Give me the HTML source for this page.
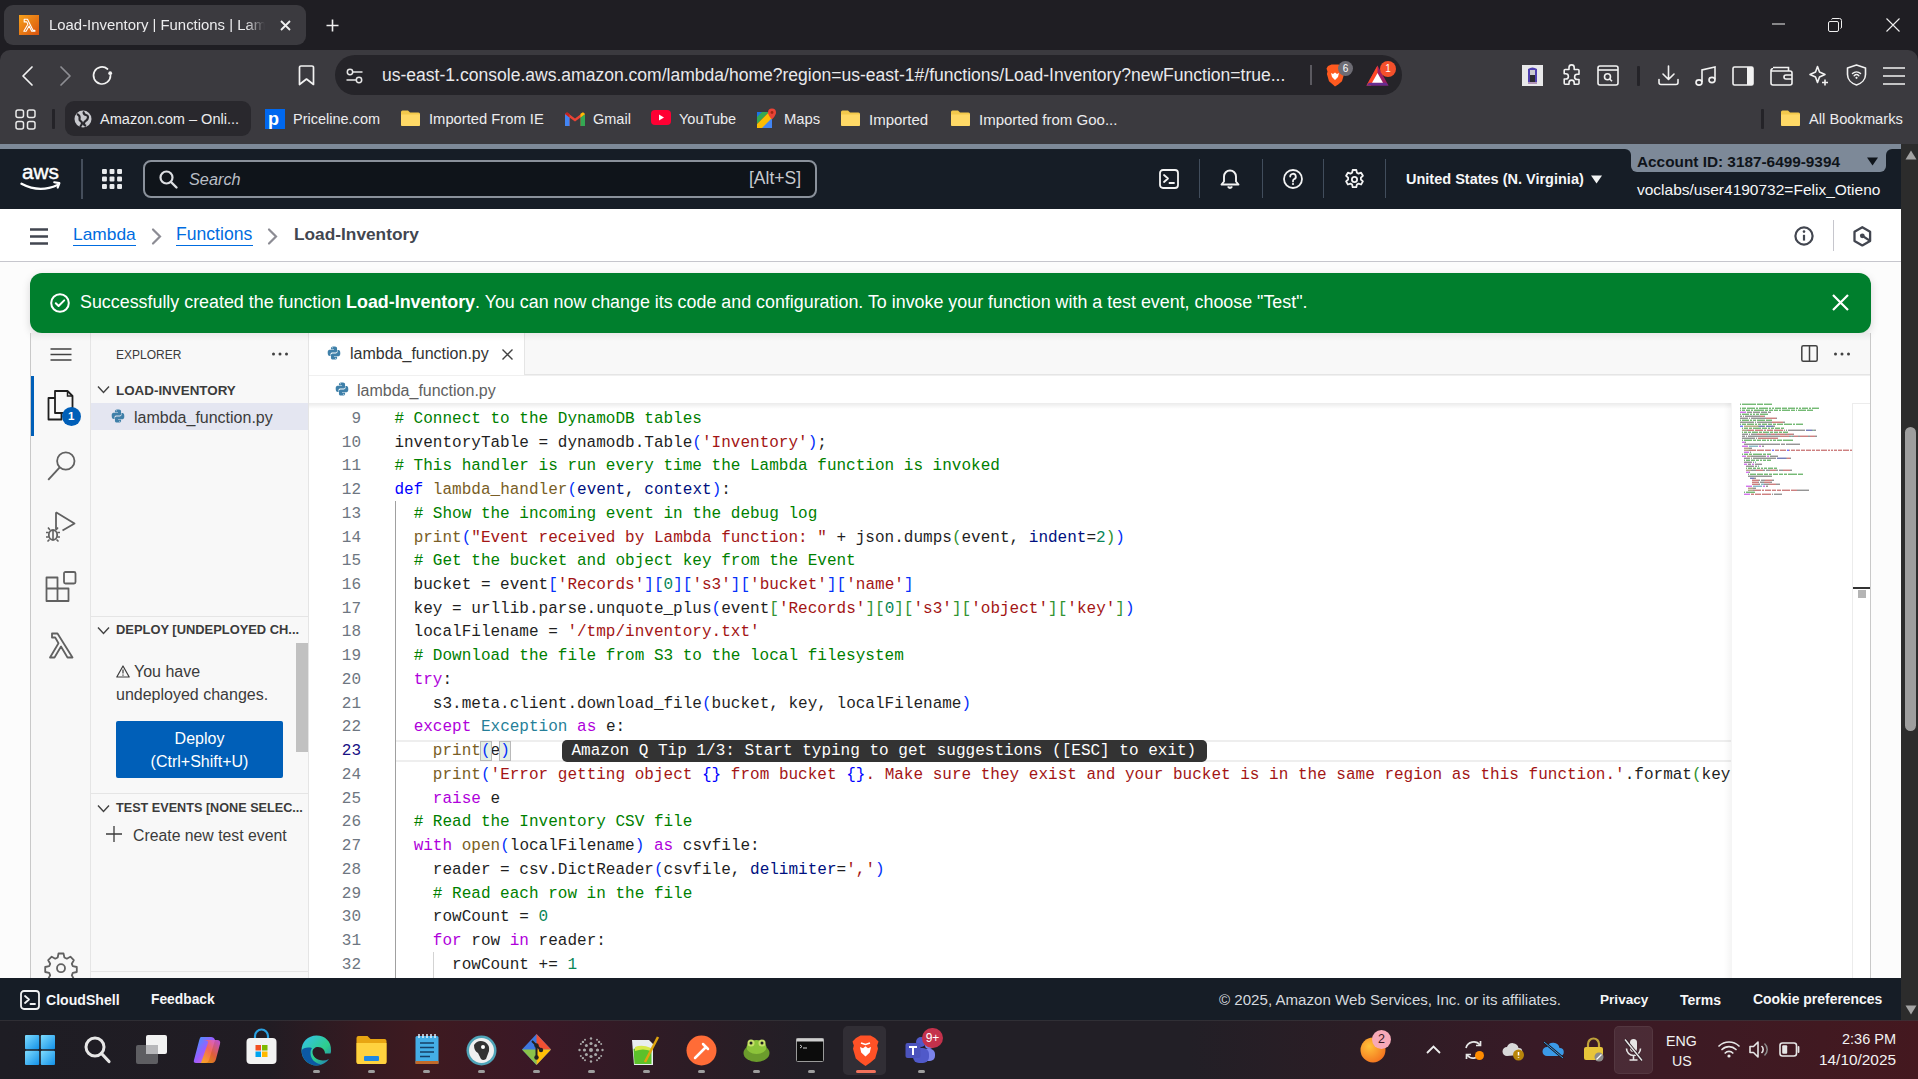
<!DOCTYPE html>
<html><head><meta charset="utf-8">
<style>
*{margin:0;padding:0;box-sizing:border-box}
html,body{width:1918px;height:1079px;overflow:hidden;background:#fcfcfc;font-family:"Liberation Sans",sans-serif}
.a{position:absolute}
.t{position:absolute;white-space:nowrap;line-height:1}
svg{position:absolute;overflow:visible}
.m{font-family:"Liberation Mono",monospace}
</style></head><body>
<!-- ============ BROWSER TAB BAR ============ -->
<div class="a" style="left:0;top:0;width:1918px;height:144px;background:#1f1e23"></div>
<div class="a" style="left:4px;top:5px;width:302px;height:40px;background:#3b3a3f;border-radius:9px"></div>
<div class="a" style="left:19px;top:15px;width:20px;height:20px;background:linear-gradient(135deg,#f7a21b,#d9530f)"></div>
<svg style="left:19px;top:15px" width="20" height="20" viewBox="0 0 20 20"><path d="M5.2 4.2h3.3l5.6 11.2h1.8v0.8h-3.2l-2.6-5.3-3 5.3h-2.3l4.1-7-1.1-2.3H5.2z" fill="none" stroke="#fff" stroke-width="1.1" stroke-linejoin="round"/></svg>
<div class="t" style="left:49px;top:17.5px;font-size:14.9px;color:#ececee;width:216px;overflow:hidden;-webkit-mask-image:linear-gradient(90deg,#000 91%,transparent 100%)">Load-Inventory | Functions | Lambda</div>
<svg style="left:280px;top:20px" width="11" height="11" viewBox="0 0 11 11"><path d="M1 1L10 10M10 1L1 10" stroke="#f0f0f0" stroke-width="1.8"/></svg>
<svg style="left:326px;top:19px" width="13" height="13" viewBox="0 0 13 13"><path d="M6.5 0.5v12M0.5 6.5h12" stroke="#f0f0f0" stroke-width="1.6"/></svg>
<svg style="left:1772px;top:23px" width="13" height="2" viewBox="0 0 13 2"><path d="M0 1h13" stroke="#f0f0f0" stroke-width="1"/></svg>
<svg style="left:1828px;top:18px" width="14" height="14" viewBox="0 0 14 14"><rect x="0.5" y="3.5" width="10" height="10" rx="1.5" fill="none" stroke="#f0f0f0" stroke-width="1"/><path d="M3.5 1.5a1.5 1.5 0 0 1 1.5-1h6.5a2 2 0 0 1 2 2V9a1.5 1.5 0 0 1-1 1.5" fill="none" stroke="#f0f0f0" stroke-width="1"/></svg>
<svg style="left:1886px;top:18px" width="14" height="14" viewBox="0 0 14 14"><path d="M0.5 0.5L13.5 13.5M13.5 0.5L0.5 13.5" stroke="#f0f0f0" stroke-width="1.1"/></svg>

<!-- ============ TOOLBAR ============ -->
<div class="a" style="left:0;top:50px;width:1918px;height:94px;background:#3b3a3f;border-radius:10px 10px 0 0"></div>
<svg style="left:22px;top:66px" width="11" height="20" viewBox="0 0 11 20"><path d="M10 1L1 10l9 9" fill="none" stroke="#f2f2f2" stroke-width="1.7" stroke-linecap="round" stroke-linejoin="round"/></svg>
<svg style="left:60px;top:66px" width="11" height="20" viewBox="0 0 11 20"><path d="M1 1l9 9-9 9" fill="none" stroke="#8e8e93" stroke-width="1.7" stroke-linecap="round" stroke-linejoin="round"/></svg>
<svg style="left:92px;top:65px" width="22" height="21" viewBox="0 0 22 21"><path d="M18.5 10.5a8.5 8.5 0 1 1-3-6.5" fill="none" stroke="#f2f2f2" stroke-width="1.7" stroke-linecap="round"/><circle cx="18.2" cy="8.2" r="1.9" fill="#f2f2f2"/></svg>
<svg style="left:298px;top:65px" width="17" height="21" viewBox="0 0 17 21"><path d="M1.5 2.5a1.5 1.5 0 0 1 1.5-1.5h11a1.5 1.5 0 0 1 1.5 1.5V19.5L8.5 14 1.5 19.5z" fill="none" stroke="#f2f2f2" stroke-width="1.7" stroke-linejoin="round"/></svg>
<div class="a" style="left:335px;top:55px;width:1067px;height:40px;background:#252429;border-radius:20px"></div>
<svg style="left:346px;top:68px" width="17" height="16" viewBox="0 0 17 16"><circle cx="4" cy="4" r="2.7" fill="none" stroke="#e6e6e6" stroke-width="1.5"/><path d="M7 4h9.5" stroke="#e6e6e6" stroke-width="1.5"/><circle cx="13" cy="12" r="2.7" fill="none" stroke="#e6e6e6" stroke-width="1.5"/><path d="M0.5 12h9.5" stroke="#e6e6e6" stroke-width="1.5"/></svg>
<div class="t" style="left:382px;top:67px;font-size:17.55px;color:#e9e9ec">us-east-1.console.aws.amazon.com/lambda/home?region=us-east-1#/functions/Load-Inventory?newFunction=true...</div>
<div class="a" style="left:1310px;top:65px;width:2px;height:20px;background:#5b5a60"></div>
<!-- brave lion -->
<svg style="left:1325px;top:64px" width="20" height="23" viewBox="0 0 20 23"><path d="M3 2l3.5-1.5h7L17 2l2.5 2.5-1 3 .6 2.5-2.1 7.2-3.8 3.3L10 22.5 7.8 20.5 4 17.2 1.9 10l.6-2.5-1-3z" fill="#ff5a1f"/><path d="M6 9l2 1 2-1.5 2 1.5 2-1-1 4-3 3-3-3z" fill="#fff"/></svg>
<div class="a" style="left:1338px;top:61px;width:15px;height:15px;border-radius:50%;background:#6d6c74;color:#fff;font-size:10px;line-height:15px;text-align:center">6</div>
<svg style="left:1366px;top:65px" width="23" height="21" viewBox="0 0 23 21"><path d="M11.5 0.5L22.5 20.5H0.5z" fill="#9e1f63"/><path d="M11.5 0.5L0.5 20.5h4.5L11.5 8z" fill="#ff4724"/><path d="M0.5 20.5h22l-2.5-2.8H3z" fill="#662d91"/><path d="M11.5 8l5.5 9.7H6z" fill="#fff"/></svg>
<div class="a" style="left:1380px;top:61px;width:16px;height:16px;border-radius:50%;background:#f4502b;color:#fff;font-size:10px;line-height:16px;text-align:center">1</div>
<!-- right icons -->
<div class="a" style="left:1522px;top:65px;width:21px;height:21px;background:#e8e8ea"></div>
<svg style="left:1522px;top:65px" width="21" height="21" viewBox="0 0 21 21"><path d="M6 4q4.5-3 9 0v13H6z" fill="#4f3fb0"/><rect x="8" y="5" width="5" height="5" fill="#c9c9cf"/><rect x="8" y="10" width="5" height="7" fill="#2a2a30"/><path d="M6 18h9" stroke="#a07aa8" stroke-width="1.5"/></svg>
<svg style="left:1561px;top:64px" width="22" height="22" viewBox="0 0 22 22"><path d="M8 3.5a2.6 2.6 0 0 1 5.2 0V5.5H17a1 1 0 0 1 1 1v3.8h-1.8a2.6 2.6 0 0 0 0 5.2H18v3.8a1 1 0 0 1-1 1H13.2v-1.6a2.6 2.6 0 0 0-5.2 0v1.6H4.2a1 1 0 0 1-1-1V15h1.6a2.6 2.6 0 0 0 0-5.2H3.2V6.5a1 1 0 0 1 1-1H8z" fill="none" stroke="#f2f2f2" stroke-width="1.6" stroke-linejoin="round"/></svg>
<svg style="left:1597px;top:65px" width="22" height="21" viewBox="0 0 22 21"><rect x="1" y="1" width="20" height="19" rx="2" fill="none" stroke="#f2f2f2" stroke-width="1.6"/><path d="M1 5h20" stroke="#f2f2f2" stroke-width="1.6"/><circle cx="10.5" cy="11.8" r="3" fill="none" stroke="#f2f2f2" stroke-width="1.6"/><path d="M12.7 14l2.3 2.3" stroke="#f2f2f2" stroke-width="1.6"/></svg>
<div class="a" style="left:1637px;top:66px;width:3px;height:20px;background:#242328;border-radius:1px"></div>
<svg style="left:1658px;top:65px" width="21" height="21" viewBox="0 0 21 21"><path d="M10.5 1v13M5 9l5.5 5.5L16 9M1 14.5v3a2 2 0 0 0 2 2h15a2 2 0 0 0 2-2v-3" fill="none" stroke="#f2f2f2" stroke-width="1.6" stroke-linecap="round" stroke-linejoin="round"/></svg>
<svg style="left:1695px;top:65px" width="22" height="22" viewBox="0 0 22 22"><path d="M7 17V5l13-3v12.5" fill="none" stroke="#f2f2f2" stroke-width="1.6"/><ellipse cx="4" cy="17.5" rx="3" ry="2.6" fill="none" stroke="#f2f2f2" stroke-width="1.6"/><ellipse cx="17" cy="15" rx="3" ry="2.6" fill="none" stroke="#f2f2f2" stroke-width="1.6"/></svg>
<svg style="left:1732px;top:66px" width="22" height="20" viewBox="0 0 22 20"><rect x="1" y="1" width="20" height="18" rx="1.5" fill="none" stroke="#f2f2f2" stroke-width="1.6"/><rect x="15" y="1" width="6" height="18" fill="#f2f2f2"/></svg>
<svg style="left:1770px;top:66px" width="23" height="20" viewBox="0 0 23 20"><path d="M3 1.5h15.5V5M1 4.5a2 2 0 0 1 2-2M1 4.5V17a2 2 0 0 0 2 2h17a2 2 0 0 0 2-2V7a2 2 0 0 0-2-2H1" fill="none" stroke="#f2f2f2" stroke-width="1.6"/><path d="M22 9h-6a2 2 0 0 0 0 4h6" fill="none" stroke="#f2f2f2" stroke-width="1.6"/></svg>
<svg style="left:1808px;top:65px" width="22" height="22" viewBox="0 0 22 22"><path d="M9.5 1.5l2 5.5 5.5 2.5-5.5 2.5-2 5.5-2-5.5L2 9.5l5.5-2.5z" fill="none" stroke="#f2f2f2" stroke-width="1.6" stroke-linejoin="round"/><path d="M17 14.5v6M14 17.5h6" stroke="#f2f2f2" stroke-width="1.6"/></svg>
<svg style="left:1846px;top:64px" width="21" height="22" viewBox="0 0 21 22"><path d="M10.5 1L19.5 4v6.5c0 5-4 9-9 10.5C5.5 19.5 1.5 15.5 1.5 10.5V4z" fill="none" stroke="#f2f2f2" stroke-width="1.6" stroke-linejoin="round"/><path d="M6.5 9.5a6 6 0 0 1 8 0M8.2 11.7a3.3 3.3 0 0 1 4.6 0" fill="none" stroke="#f2f2f2" stroke-width="1.5" stroke-linecap="round"/><circle cx="10.5" cy="13.8" r="1.1" fill="#f2f2f2"/></svg>
<svg style="left:1883px;top:67px" width="22" height="18" viewBox="0 0 22 18"><path d="M0 1h22M0 9h22M0 17h22" stroke="#f2f2f2" stroke-width="1.6"/></svg>

<!-- ============ BOOKMARKS BAR ============ -->
<svg style="left:15px;top:109px" width="21" height="21" viewBox="0 0 21 21"><rect x="1" y="1" width="7.5" height="7.5" rx="2" fill="none" stroke="#e9e9e9" stroke-width="1.5"/><rect x="12.5" y="1" width="7.5" height="7.5" rx="2" fill="none" stroke="#e9e9e9" stroke-width="1.5"/><rect x="1" y="12.5" width="7.5" height="7.5" rx="2" fill="none" stroke="#e9e9e9" stroke-width="1.5"/><rect x="12.5" y="12.5" width="7.5" height="7.5" rx="2" fill="none" stroke="#e9e9e9" stroke-width="1.5"/></svg>
<div class="a" style="left:52px;top:109px;width:3px;height:20px;background:#242328;border-radius:1px"></div>
<div class="a" style="left:65px;top:101px;width:186px;height:35px;background:#29282d;border-radius:9px"></div>
<svg style="left:74px;top:110px" width="18" height="18" viewBox="0 0 18 18"><circle cx="9" cy="9" r="8.5" fill="#c8c9ce"/><path d="M3 4c2 1 3 3 2.5 5S8 11 8 13s-1.5 3-2 3.8M10 1.5c-1 1.5 0 3 2 3.5s2.5 2 1.5 4-3 2-3.5 4 1 2.5 2 3" fill="none" stroke="#29282d" stroke-width="2.2"/></svg>
<div class="t" style="left:100px;top:112px;font-size:14.55px;color:#ececee">Amazon.com – Onli...</div>
<div class="a" style="left:265px;top:109px;width:20px;height:20px;background:#0068ef"></div>
<div class="t" style="left:268px;top:110px;font-size:18px;font-weight:bold;color:#fff">p</div>
<div class="t" style="left:293px;top:112px;font-size:14.5px;color:#ececee">Priceline.com</div>
<svg style="left:401px;top:110px" width="19" height="16" viewBox="0 0 19 16"><path d="M0 2a1.5 1.5 0 0 1 1.5-1.5H7l2 2h8.5A1.5 1.5 0 0 1 19 4v10.5a1.5 1.5 0 0 1-1.5 1.5h-16A1.5 1.5 0 0 1 0 14.5z" fill="#f3c94c"/><path d="M0 4.5h19v10a1.5 1.5 0 0 1-1.5 1.5h-16A1.5 1.5 0 0 1 0 14.5z" fill="#ffd966"/></svg>
<div class="t" style="left:429px;top:112px;font-size:14.75px;color:#ececee">Imported From IE</div>
<svg style="left:565px;top:111px" width="20" height="16" viewBox="0 0 20 16"><path d="M0 3v12h4.5V6.5L10 10.5l5.5-4V15H20V3l-2-1.6-8 6-8-6z" fill="#ea4335"/><path d="M0 3v12h4.5V6.5z" fill="#4285f4"/><path d="M15.5 6.5V15H20V3z" fill="#34a853"/><path d="M20 3l-4.5 3.5V2.8L18 1.2z" fill="#fbbc04"/><path d="M0 3l4.5 3.5V2.8L2 1.2z" fill="#c5221f"/></svg>
<div class="t" style="left:593px;top:112px;font-size:14.5px;color:#ececee">Gmail</div>
<div class="a" style="left:651px;top:110px;width:20px;height:15px;background:#ff0033;border-radius:4px"></div>
<svg style="left:651px;top:110px" width="20" height="15" viewBox="0 0 20 15"><path d="M8 4.5v6l5-3z" fill="#fff"/></svg>
<div class="t" style="left:679px;top:112px;font-size:14.55px;color:#ececee">YouTube</div>
<svg style="left:757px;top:108px" width="19" height="20" viewBox="0 0 19 20"><path d="M0 4h12l-12 12z" fill="#34a853"/><path d="M0 16L12 4h3v16H0z" fill="#fbbc04"/><path d="M5 20L15 10v10z" fill="#4285f4"/><path d="M0 4h5L0 9z" fill="#1a73e8"/><path d="M15 0.5a4 4 0 0 0-4 4c0 3 4 7 4 7s4-4 4-7a4 4 0 0 0-4-4z" fill="#ea4335"/><circle cx="15" cy="4.5" r="1.4" fill="#a52714"/></svg>
<div class="t" style="left:784px;top:112px;font-size:14.8px;color:#ececee">Maps</div>
<svg style="left:841px;top:110px" width="19" height="16" viewBox="0 0 19 16"><path d="M0 2a1.5 1.5 0 0 1 1.5-1.5H7l2 2h8.5A1.5 1.5 0 0 1 19 4v10.5a1.5 1.5 0 0 1-1.5 1.5h-16A1.5 1.5 0 0 1 0 14.5z" fill="#f3c94c"/><path d="M0 4.5h19v10a1.5 1.5 0 0 1-1.5 1.5h-16A1.5 1.5 0 0 1 0 14.5z" fill="#ffd966"/></svg>
<div class="t" style="left:869px;top:112px;font-size:15px;color:#ececee">Imported</div>
<svg style="left:951px;top:110px" width="19" height="16" viewBox="0 0 19 16"><path d="M0 2a1.5 1.5 0 0 1 1.5-1.5H7l2 2h8.5A1.5 1.5 0 0 1 19 4v10.5a1.5 1.5 0 0 1-1.5 1.5h-16A1.5 1.5 0 0 1 0 14.5z" fill="#f3c94c"/><path d="M0 4.5h19v10a1.5 1.5 0 0 1-1.5 1.5h-16A1.5 1.5 0 0 1 0 14.5z" fill="#ffd966"/></svg>
<div class="t" style="left:979px;top:112px;font-size:15px;color:#ececee">Imported from Goo...</div>
<div class="a" style="left:1761px;top:109px;width:3px;height:20px;background:#242328;border-radius:1px"></div>
<svg style="left:1781px;top:110px" width="19" height="16" viewBox="0 0 19 16"><path d="M0 2a1.5 1.5 0 0 1 1.5-1.5H7l2 2h8.5A1.5 1.5 0 0 1 19 4v10.5a1.5 1.5 0 0 1-1.5 1.5h-16A1.5 1.5 0 0 1 0 14.5z" fill="#f3c94c"/><path d="M0 4.5h19v10a1.5 1.5 0 0 1-1.5 1.5h-16A1.5 1.5 0 0 1 0 14.5z" fill="#ffd966"/></svg>
<div class="t" style="left:1809px;top:112px;font-size:14.7px;color:#ececee">All Bookmarks</div>
<!-- ============ AWS NAV ============ -->
<div class="a" style="left:0;top:144px;width:1901px;height:12px;background:#7d8998"></div>
<div class="a" style="left:0;top:149px;width:1631px;height:60px;background:#161d26;border-top-right-radius:6px"></div>
<div class="a" style="left:1631px;top:156px;width:255px;height:53px;background:#161d26"></div>
<div class="a" style="left:1886px;top:149px;width:15px;height:60px;background:#161d26;border-top-left-radius:6px"></div>
<svg style="left:20px;top:165px" width="42" height="27" viewBox="0 0 42 27">
<text x="2" y="13.6" font-family="Liberation Sans" font-size="20" fill="#fff" stroke="#fff" stroke-width="0.4" textLength="37" lengthAdjust="spacingAndGlyphs">aws</text>
<path d="M1.5 18.8q18 9.5 36 1.2" fill="none" stroke="#fff" stroke-width="2.4" stroke-linecap="round"/>
<path d="M34.2 17.2l5.2 0.9-1.7 4.5" fill="none" stroke="#fff" stroke-width="2.1" stroke-linecap="round" stroke-linejoin="round"/>
</svg>
<div class="a" style="left:81px;top:159px;width:1.5px;height:40px;background:#454e5b"></div>
<svg style="left:102px;top:169px" width="20" height="20" viewBox="0 0 20 20" fill="#e9ebed"><rect x="0" y="0" width="4.9" height="4.9" rx="1"/><rect x="7.55" y="0" width="4.9" height="4.9" rx="1"/><rect x="15.1" y="0" width="4.9" height="4.9" rx="1"/><rect x="0" y="7.55" width="4.9" height="4.9" rx="1"/><rect x="7.55" y="7.55" width="4.9" height="4.9" rx="1"/><rect x="15.1" y="7.55" width="4.9" height="4.9" rx="1"/><rect x="0" y="15.1" width="4.9" height="4.9" rx="1"/><rect x="7.55" y="15.1" width="4.9" height="4.9" rx="1"/><rect x="15.1" y="15.1" width="4.9" height="4.9" rx="1"/></svg>
<div class="a" style="left:143px;top:160px;width:674px;height:38px;background:#0f141a;border:2px solid #8a919b;border-radius:8px"></div>
<svg style="left:159px;top:170px" width="19" height="19" viewBox="0 0 19 19"><circle cx="7.5" cy="7.5" r="6" fill="none" stroke="#dcdee2" stroke-width="2.2"/><path d="M12 12l5.5 5.5" stroke="#dcdee2" stroke-width="2.4" stroke-linecap="round"/></svg>
<div class="t" style="left:189px;top:171px;font-size:16.3px;font-style:italic;color:#b9bec6">Search</div>
<div class="t" style="left:749px;top:170px;font-size:17.5px;color:#c6c9ce">[Alt+S]</div>
<svg style="left:1159px;top:169px" width="20" height="20" viewBox="0 0 20 20"><rect x="1" y="1" width="18" height="18" rx="3" fill="none" stroke="#f2f3f3" stroke-width="1.8"/><path d="M5 6l4 3.5L5 13M10.5 14h4.5" fill="none" stroke="#f2f3f3" stroke-width="1.8" stroke-linecap="round" stroke-linejoin="round"/></svg>
<div class="a" style="left:1199px;top:159px;width:1px;height:39px;background:#414d5c"></div>
<svg style="left:1220px;top:169px" width="20" height="21" viewBox="0 0 20 21"><path d="M10 1.5a6 6 0 0 0-6 6v5L1.5 15.5h17L16 12.5v-5a6 6 0 0 0-6-6z" fill="none" stroke="#f2f3f3" stroke-width="1.9" stroke-linejoin="round"/><path d="M7.8 17.5a2.3 2.3 0 0 0 4.4 0" fill="#f2f3f3" stroke="#f2f3f3" stroke-width="1.5"/></svg>
<div class="a" style="left:1262px;top:159px;width:1px;height:39px;background:#414d5c"></div>
<svg style="left:1283px;top:169px" width="20" height="20" viewBox="0 0 20 20"><circle cx="10" cy="10" r="9" fill="none" stroke="#f2f3f3" stroke-width="1.8"/><path d="M7.2 7.6a2.8 2.8 0 1 1 3.8 2.6c-.8.4-1 .9-1 1.8v.6" fill="none" stroke="#f2f3f3" stroke-width="1.8" stroke-linecap="round"/><circle cx="10" cy="15" r="1.1" fill="#f2f3f3"/></svg>
<div class="a" style="left:1323px;top:159px;width:1px;height:39px;background:#414d5c"></div>
<svg style="left:1344px;top:169px" width="21" height="21" viewBox="0 0 21 21"><path d="M8.7 1h3.6l.6 2.7 1.6.9 2.6-.9 1.8 3.1-2 1.9v1.8l2 1.9-1.8 3.1-2.6-.9-1.6.9-.6 2.7H8.7l-.6-2.7-1.6-.9-2.6.9-1.8-3.1 2-1.9V8.7l-2-1.9 1.8-3.1 2.6.9 1.6-.9z" fill="none" stroke="#f2f3f3" stroke-width="1.8" stroke-linejoin="round"/><circle cx="10.5" cy="10.5" r="2.6" fill="none" stroke="#f2f3f3" stroke-width="1.8"/></svg>
<div class="a" style="left:1385px;top:159px;width:1px;height:39px;background:#414d5c"></div>
<div class="t" style="left:1406px;top:172px;font-size:14.5px;font-weight:bold;color:#f6f7f8">United States (N. Virginia)</div>
<svg style="left:1591px;top:175px" width="11" height="9" viewBox="0 0 11 9"><path d="M0 0.5h11L5.5 8.5z" fill="#f2f3f3"/></svg>
<div class="a" style="left:1631px;top:144px;width:255px;height:28px;background:#7d8998;border-radius:0 0 6px 6px"></div>
<div class="t" style="left:1637px;top:154px;font-size:15.35px;font-weight:bold;color:#0f141a">Account ID: 3187-6499-9394</div>
<svg style="left:1867px;top:157px" width="11" height="9" viewBox="0 0 11 9"><path d="M0 0.5h11L5.5 8.5z" fill="#0f141a"/></svg>
<div class="t" style="left:1637px;top:182px;font-size:15.5px;color:#f6f7f8">voclabs/user4190732=Felix_Otieno</div>

<!-- ============ BREADCRUMB ============ -->
<div class="a" style="left:0;top:209px;width:1902px;height:53px;background:#fff;border-bottom:1px solid #c6c6cd"></div>
<svg style="left:30px;top:228px" width="19" height="17" viewBox="0 0 19 17"><path d="M0 1.5h18M0 8.5h18M0 15.5h18" stroke="#424650" stroke-width="2.6"/></svg>
<div class="t" style="left:73px;top:226px;font-size:17.35px;color:#006ce0">Lambda</div>
<div class="a" style="left:73px;top:245px;width:63px;height:1px;background:#006ce0"></div>
<svg style="left:151px;top:228px" width="11" height="17" viewBox="0 0 11 17"><path d="M2 1.5l7 7-7 7" fill="none" stroke="#8c8c94" stroke-width="2.2" stroke-linecap="round"/></svg>
<div class="t" style="left:176px;top:226px;font-size:17.6px;color:#006ce0">Functions</div>
<div class="a" style="left:176px;top:245px;width:77px;height:1px;background:#006ce0"></div>
<svg style="left:267px;top:228px" width="11" height="17" viewBox="0 0 11 17"><path d="M2 1.5l7 7-7 7" fill="none" stroke="#8c8c94" stroke-width="2.2" stroke-linecap="round"/></svg>
<div class="t" style="left:294px;top:226px;font-size:17.3px;font-weight:bold;color:#424650">Load-Inventory</div>
<svg style="left:1794px;top:226px" width="20" height="20" viewBox="0 0 20 20"><circle cx="10" cy="10" r="8.6" fill="none" stroke="#424650" stroke-width="2.2"/><path d="M10 8.8v5.8" stroke="#424650" stroke-width="2.2"/><circle cx="10" cy="5.6" r="1.3" fill="#424650"/></svg>
<div class="a" style="left:1833px;top:220px;width:1px;height:31px;background:#c6c6cd"></div>
<svg style="left:1853px;top:226px" width="19" height="21" viewBox="0 0 19 21"><path d="M9.3 1.2l7.8 4.5v9.2l-7.8 4.5-7.8-4.5V5.7z" fill="none" stroke="#424650" stroke-width="2.3" stroke-linejoin="round"/><circle cx="9.3" cy="9.8" r="2.4" fill="#424650"/><path d="M9.3 9.8l7 4.6" stroke="#424650" stroke-width="2.3"/></svg>

<!-- ============ FLASH ============ -->
<div class="a" style="left:30px;top:273px;width:1841px;height:60px;background:#007f2d;border-radius:12px;box-shadow:0 3px 8px rgba(0,0,0,0.15)"></div>
<svg style="left:50px;top:293px" width="20" height="20" viewBox="0 0 20 20"><circle cx="10" cy="10" r="8.8" fill="none" stroke="#fff" stroke-width="2"/><path d="M5.8 10.2l2.8 2.8 5.6-5.6" fill="none" stroke="#fff" stroke-width="2" stroke-linecap="round" stroke-linejoin="round"/></svg>
<div class="t" id="flash" style="left:80px;top:294px;font-size:17.86px;color:#fff">Successfully created the function <b>Load-Inventory</b>. You can now change its code and configuration. To invoke your function with a test event, choose "Test".</div>
<svg style="left:1832px;top:294px" width="17" height="17" viewBox="0 0 17 17"><path d="M1 1l15 15M16 1L1 16" stroke="#fff" stroke-width="2.2"/></svg>
<!-- ============ IDE FRAME ============ -->
<style>
.ln{position:absolute;left:1px;width:51px;text-align:right;height:23.75px;line-height:23.75px;font-family:"Liberation Mono",monospace;font-size:16.03px;color:#6e7681}
.ln.act{color:#171184}
.cdl{position:absolute;left:85.4px;height:23.75px;line-height:23.75px;font-family:"Liberation Mono",monospace;font-size:16.03px;white-space:pre;color:#1f1f1f}
.cdl .c{color:#008000}.cdl .k{color:#0000ff}.cdl .p{color:#af00db}.cdl .f{color:#795e26}.cdl .v{color:#001080}.cdl .s{color:#a31515}.cdl .n{color:#098658}.cdl .cl{color:#267f99}.cdl .b1{color:#0431fa}.cdl .b2{color:#319331}.cdl .b3{color:#7b3814}.cdl .d{color:#1f1f1f}
.cdl .bm{color:#0431fa;outline:1px solid #b9b9b9;background:#e4efe4}
.sb{font-family:"Liberation Sans",sans-serif}
</style>
<div class="a" style="left:30px;top:333px;width:1841px;height:645px;background:#fff;border-left:1px solid #c9c9c9;border-right:1px solid #c9c9c9"></div>
<!-- activity bar -->
<div class="a" style="left:31px;top:333px;width:60px;height:645px;background:#f8f8f8;border-right:1px solid #e5e5e5"></div>
<!-- sidebar -->
<div class="a" style="left:91px;top:333px;width:218px;height:645px;background:#f8f8f8;border-right:1px solid #e5e5e5"></div>
<!-- editor tab bar -->
<div class="a" style="left:309px;top:333px;width:1561px;height:42px;background:#f8f8f8;border-bottom:1px solid #e5e5e5"></div>
<div class="a" style="left:309px;top:333px;width:216px;height:42px;background:#fff;border-right:1px solid #e5e5e5"></div>
<!-- breadcrumbs row -->
<div class="a" style="left:309px;top:375px;width:1561px;height:28px;background:#fff;border-top:1px solid #f0f0f0"></div>
<!-- flash shadow overlay on top of IDE -->
<div class="a" style="left:31px;top:333px;width:1839px;height:8px;background:linear-gradient(rgba(0,0,0,0.06),rgba(0,0,0,0))"></div>

<!-- activity bar icons -->
<svg style="left:50px;top:348px" width="22" height="13" viewBox="0 0 22 13"><path d="M0.5 1h21M0.5 6.5h21M0.5 12h21" stroke="#424242" stroke-width="1.3"/></svg>
<div class="a" style="left:31px;top:376px;width:2.5px;height:60px;background:#005fb8"></div>
<svg style="left:47px;top:390px" width="27" height="31" viewBox="0 0 27 31"><path d="M8 8H1.5v21.5h13V23" fill="none" stroke="#1f1f1f" stroke-width="1.8" stroke-linejoin="round"/><path d="M8 1h12.5l5 5v17H8z" fill="#f8f8f8" stroke="#1f1f1f" stroke-width="1.8" stroke-linejoin="round"/><path d="M20.5 1v5h5" fill="none" stroke="#1f1f1f" stroke-width="1.5"/></svg>
<div class="a" style="left:61.7px;top:406.8px;width:19px;height:19px;border-radius:50%;background:#005fb8;color:#fff;font-size:11.5px;font-weight:bold;line-height:19px;text-align:center">1</div>
<svg style="left:47px;top:451px" width="29" height="30" viewBox="0 0 29 30"><circle cx="18.8" cy="10" r="8.7" fill="none" stroke="#616161" stroke-width="1.8"/><path d="M12.7 16.3L1.2 28.8" stroke="#616161" stroke-width="1.9"/></svg>
<svg style="left:45px;top:511px" width="31" height="31" viewBox="0 0 31 31"><path d="M11 1.2v17.5M11 1.2L29.5 12.5 17.5 19.5" fill="none" stroke="#616161" stroke-width="1.8" stroke-linejoin="round"/><ellipse cx="8" cy="24" rx="4.2" ry="5" fill="none" stroke="#616161" stroke-width="1.8"/><path d="M3.8 21.5H1M3.8 26H1M12.2 21.5H15M12.2 26H15M5 19l-2-2.5M11 19l2-2.5M4.5 28.5l-2 2M11.5 28.5l2 2M8 19.5v9" stroke="#616161" stroke-width="1.6"/></svg>
<svg style="left:45px;top:571px" width="32" height="31" viewBox="0 0 32 31"><path d="M1.5 6.5h11v11h11v12.5h-22z" fill="none" stroke="#616161" stroke-width="1.8" stroke-linejoin="round"/><path d="M1.5 17.5h11v12.5" fill="none" stroke="#616161" stroke-width="1.8"/><rect x="19" y="1" width="11.5" height="11.5" rx="1.5" fill="none" stroke="#616161" stroke-width="1.8"/></svg>
<svg style="left:49px;top:632px" width="25" height="27" viewBox="0 0 25 27"><path d="M3 1.5h5.5L23.5 25.5h-5L12 14.5 5.5 25.5H1L9.5 11.2 6.2 5.5H3z" fill="none" stroke="#616161" stroke-width="1.8" stroke-linejoin="round"/></svg>
<svg style="left:45px;top:952px" width="32" height="32" viewBox="0 0 32 32"><path d="M13.5 1.5h5l.9 4 2.4 1.2 3.6-2 3.4 3.5-2 3.6 1 2.4 4 .8v5l-4 .9-1 2.4 2 3.6-3.4 3.5-3.6-2-2.4 1-.9 4h-5l-.8-4-2.4-1-3.6 2-3.5-3.5 2-3.6-1-2.4-4-.9v-5l4-.8 1-2.4-2-3.6 3.5-3.5 3.6 2 2.4-1.2z" fill="none" stroke="#616161" stroke-width="1.8" stroke-linejoin="round"/><circle cx="16" cy="16.2" r="4" fill="none" stroke="#616161" stroke-width="1.8"/></svg>

<!-- sidebar content -->
<div class="t" style="left:116px;top:349px;font-size:12px;color:#3b3b3b">EXPLORER</div>
<svg style="left:272px;top:352px" width="16" height="4" viewBox="0 0 16 4" fill="#424242"><circle cx="1.5" cy="2" r="1.5"/><circle cx="8" cy="2" r="1.5"/><circle cx="14.5" cy="2" r="1.5"/></svg>
<svg style="left:97px;top:385px" width="13" height="9" viewBox="0 0 13 9"><path d="M1 1.5l5.5 6 5.5-6" fill="none" stroke="#424242" stroke-width="1.4"/></svg>
<div class="t" style="left:116px;top:384px;font-size:13.4px;font-weight:bold;color:#3b3b3b">LOAD-INVENTORY</div>
<div class="a" style="left:91px;top:403px;width:217px;height:27px;background:#e4e6f1"></div>
<svg style="left:111px;top:409px" width="14" height="14" viewBox="0 0 16 16"><path id="py" d="M7.9 0.5C4.3 0.5 4.5 2.1 4.5 2.1V3.8H8v.6H3.1S.8 4.1.8 7.8c0 3.6 2 3.5 2 3.5H4V9.6S3.9 7.5 6 7.5h3.5s2 0 2-1.9V2.4S11.8.5 7.9.5zM6 1.4a.6.6 0 1 1 0 1.2.6.6 0 0 1 0-1.2zM8.1 15.5c3.6 0 3.4-1.6 3.4-1.6v-1.7H8v-.6h4.9s2.3.3 2.3-3.4c0-3.6-2-3.5-2-3.5H12v1.7s.1 2.1-2 2.1H6.5s-2 0-2 1.9v3.2s-.3 1.9 3.6 1.9zm1.9-.9a.6.6 0 1 1 0-1.2.6.6 0 0 1 0 1.2z" fill="#3f80a9"/></svg>
<div class="t" style="left:134px;top:410px;font-size:16px;color:#3b3b3b">lambda_function.py</div>

<div class="a" style="left:91px;top:616px;width:217px;height:1px;background:#e5e5e5"></div>
<svg style="left:97px;top:626px" width="13" height="9" viewBox="0 0 13 9"><path d="M1 1.5l5.5 6 5.5-6" fill="none" stroke="#424242" stroke-width="1.4"/></svg>
<div class="t" style="left:116px;top:624px;font-size:12.9px;font-weight:bold;color:#3b3b3b">DEPLOY [UNDEPLOYED CH...</div>
<div class="a" style="left:296px;top:643px;width:12px;height:109px;background:#c1c1c1"></div>
<svg style="left:116px;top:665px" width="14" height="13" viewBox="0 0 14 13"><path d="M7 1L13.2 12H0.8z" fill="none" stroke="#3b3b3b" stroke-width="1.2" stroke-linejoin="round"/><path d="M7 4.5v4M7 9.6v1.2" stroke="#3b3b3b" stroke-width="1.2"/></svg>
<div class="t" style="left:134px;top:664px;font-size:16px;color:#3b3b3b">You have</div>
<div class="t" style="left:116px;top:687px;font-size:16px;color:#3b3b3b">undeployed changes.</div>
<div class="a" style="left:116px;top:721px;width:167px;height:57px;background:#005fb8;border-radius:2px"></div>
<div class="t" style="left:116px;top:731px;width:167px;text-align:center;font-size:16px;color:#fff">Deploy</div>
<div class="t" style="left:116px;top:754px;width:167px;text-align:center;font-size:16px;color:#fff">(Ctrl+Shift+U)</div>
<div class="a" style="left:91px;top:793px;width:217px;height:1px;background:#e5e5e5"></div>
<svg style="left:97px;top:804px" width="13" height="9" viewBox="0 0 13 9"><path d="M1 1.5l5.5 6 5.5-6" fill="none" stroke="#424242" stroke-width="1.4"/></svg>
<div class="t" style="left:116px;top:802px;font-size:12.65px;font-weight:bold;color:#3b3b3b">TEST EVENTS [NONE SELEC...</div>
<svg style="left:106px;top:826px" width="16" height="16" viewBox="0 0 16 16"><path d="M8 0v16M0 8h16" stroke="#3b3b3b" stroke-width="1.3"/></svg>
<div class="t" style="left:133px;top:828px;font-size:15.8px;color:#3b3b3b">Create new test event</div>
<div class="a" style="left:91px;top:971px;width:217px;height:1px;background:#e5e5e5"></div>

<!-- editor tabs -->
<svg style="left:327px;top:346px" width="14" height="14" viewBox="0 0 16 16"><use href="#py"/></svg>
<div class="t" style="left:350px;top:346px;font-size:16px;color:#333">lambda_function.py</div>
<svg style="left:502px;top:349px" width="11" height="11" viewBox="0 0 11 11"><path d="M0.5 0.5l10 10M10.5 0.5l-10 10" stroke="#424242" stroke-width="1.4"/></svg>
<svg style="left:1801px;top:345px" width="17" height="17" viewBox="0 0 17 17"><rect x="0.8" y="0.8" width="15.4" height="15.4" rx="1.5" fill="none" stroke="#424242" stroke-width="1.5"/><path d="M8.5 1v15" stroke="#424242" stroke-width="1.5"/></svg>
<svg style="left:1834px;top:352px" width="16" height="4" viewBox="0 0 16 4" fill="#424242"><circle cx="1.5" cy="2" r="1.5"/><circle cx="8" cy="2" r="1.5"/><circle cx="14.5" cy="2" r="1.5"/></svg>
<svg style="left:335px;top:382px" width="14" height="14" viewBox="0 0 16 16"><use href="#py"/></svg>
<div class="t" style="left:357px;top:383px;font-size:16px;color:#616161">lambda_function.py</div>
<!-- ============ CODE ============ -->
<div class="a" style="left:309px;top:403px;width:1422px;height:575px;overflow:hidden;background:#fff">
<!-- current line highlight line 23 -->
<div class="a" style="left:86px;top:336.5px;width:1340px;height:22px;border-top:2px solid #eeeeee;border-bottom:2px solid #eeeeee"></div>
<!-- indent guides -->
<div class="a" style="left:85.5px;top:98px;width:1px;height:480px;background:#a0a0a0"></div>
<div class="a" style="left:124px;top:549px;width:1px;height:30px;background:#d3d3d3"></div>
<div class="ln" style="top:4.90px">9</div>
<div class="cdl" style="top:4.90px"><span class="c"># Connect to the DynamoDB tables</span></div>
<div class="ln" style="top:28.63px">10</div>
<div class="cdl" style="top:28.63px"><span class="d">inventoryTable = dynamodb.Table</span><span class="b1">(</span><span class="s">&#x27;Inventory&#x27;</span><span class="b1">)</span><span class="d">;</span></div>
<div class="ln" style="top:52.36px">11</div>
<div class="cdl" style="top:52.36px"><span class="c"># This handler is run every time the Lambda function is invoked</span></div>
<div class="ln" style="top:76.09px">12</div>
<div class="cdl" style="top:76.09px"><span class="k">def</span><span class="d"> </span><span class="f">lambda_handler</span><span class="b1">(</span><span class="v">event</span><span class="d">, </span><span class="v">context</span><span class="b1">)</span><span class="d">:</span></div>
<div class="ln" style="top:99.82px">13</div>
<div class="cdl" style="top:99.82px"><span class="d">  </span><span class="c"># Show the incoming event in the debug log</span></div>
<div class="ln" style="top:123.55px">14</div>
<div class="cdl" style="top:123.55px"><span class="d">  </span><span class="f">print</span><span class="b1">(</span><span class="s">&quot;Event received by Lambda function: &quot;</span><span class="d"> + json.</span><span class="d">dumps</span><span class="b2">(</span><span class="d">event, </span><span class="v">indent</span><span class="d">=</span><span class="n">2</span><span class="b2">)</span><span class="b1">)</span></div>
<div class="ln" style="top:147.28px">15</div>
<div class="cdl" style="top:147.28px"><span class="d">  </span><span class="c"># Get the bucket and object key from the Event</span></div>
<div class="ln" style="top:171.01px">16</div>
<div class="cdl" style="top:171.01px"><span class="d">  bucket = event</span><span class="b1">[</span><span class="s">&#x27;Records&#x27;</span><span class="b1">][</span><span class="n">0</span><span class="b1">][</span><span class="s">&#x27;s3&#x27;</span><span class="b1">][</span><span class="s">&#x27;bucket&#x27;</span><span class="b1">][</span><span class="s">&#x27;name&#x27;</span><span class="b1">]</span></div>
<div class="ln" style="top:194.74px">17</div>
<div class="cdl" style="top:194.74px"><span class="d">  key = urllib.parse.</span><span class="d">unquote_plus</span><span class="b1">(</span><span class="d">event</span><span class="b2">[</span><span class="s">&#x27;Records&#x27;</span><span class="b2">][</span><span class="n">0</span><span class="b2">][</span><span class="s">&#x27;s3&#x27;</span><span class="b2">][</span><span class="s">&#x27;object&#x27;</span><span class="b2">][</span><span class="s">&#x27;key&#x27;</span><span class="b2">]</span><span class="b1">)</span></div>
<div class="ln" style="top:218.47px">18</div>
<div class="cdl" style="top:218.47px"><span class="d">  localFilename = </span><span class="s">&#x27;/tmp/inventory.txt&#x27;</span></div>
<div class="ln" style="top:242.20px">19</div>
<div class="cdl" style="top:242.20px"><span class="d">  </span><span class="c"># Download the file from S3 to the local filesystem</span></div>
<div class="ln" style="top:265.93px">20</div>
<div class="cdl" style="top:265.93px"><span class="d">  </span><span class="p">try</span><span class="d">:</span></div>
<div class="ln" style="top:289.66px">21</div>
<div class="cdl" style="top:289.66px"><span class="d">    s3.meta.client.</span><span class="d">download_file</span><span class="b1">(</span><span class="d">bucket, key, localFilename</span><span class="b1">)</span></div>
<div class="ln" style="top:313.39px">22</div>
<div class="cdl" style="top:313.39px"><span class="d">  </span><span class="p">except</span><span class="d"> </span><span class="cl">Exception</span><span class="d"> </span><span class="p">as</span><span class="d"> e:</span></div>
<div class="ln act" style="top:337.12px">23</div>
<div class="cdl" style="top:337.12px"><span class="d">    </span><span class="f">print</span><span class="bm">(</span><span class="d">e</span><span class="bm">)</span></div>
<div class="ln" style="top:360.85px">24</div>
<div class="cdl" style="top:360.85px"><span class="d">    </span><span class="f">print</span><span class="b1">(</span><span class="s">&#x27;Error getting object </span><span class="k">{}</span><span class="s"> from bucket </span><span class="k">{}</span><span class="s">. Make sure they exist and your bucket is in the same region as this function.&#x27;</span><span class="d">.</span><span class="d">format</span><span class="b2">(</span><span class="d">key</span></div>
<div class="ln" style="top:384.58px">25</div>
<div class="cdl" style="top:384.58px"><span class="d">    </span><span class="p">raise</span><span class="d"> e</span></div>
<div class="ln" style="top:408.31px">26</div>
<div class="cdl" style="top:408.31px"><span class="d">  </span><span class="c"># Read the Inventory CSV file</span></div>
<div class="ln" style="top:432.04px">27</div>
<div class="cdl" style="top:432.04px"><span class="d">  </span><span class="p">with</span><span class="d"> </span><span class="f">open</span><span class="b1">(</span><span class="d">localFilename</span><span class="b1">)</span><span class="d"> </span><span class="p">as</span><span class="d"> csvfile:</span></div>
<div class="ln" style="top:455.77px">28</div>
<div class="cdl" style="top:455.77px"><span class="d">    reader = csv.</span><span class="d">DictReader</span><span class="b1">(</span><span class="d">csvfile, </span><span class="v">delimiter</span><span class="d">=</span><span class="s">&#x27;,&#x27;</span><span class="b1">)</span></div>
<div class="ln" style="top:479.50px">29</div>
<div class="cdl" style="top:479.50px"><span class="d">    </span><span class="c"># Read each row in the file</span></div>
<div class="ln" style="top:503.23px">30</div>
<div class="cdl" style="top:503.23px"><span class="d">    rowCount = </span><span class="n">0</span></div>
<div class="ln" style="top:526.96px">31</div>
<div class="cdl" style="top:526.96px"><span class="d">    </span><span class="p">for</span><span class="d"> row </span><span class="p">in</span><span class="d"> reader:</span></div>
<div class="ln" style="top:550.69px">32</div>
<div class="cdl" style="top:550.69px"><span class="d">      rowCount += </span><span class="n">1</span></div>
<div class="ln" style="top:574.42px">33</div>
<div class="cdl" style="top:574.42px"><span class="d">      </span></div>
<!-- amazon q tip -->
<div class="a m" style="left:253px;top:336.5px;width:645px;height:22px;background:#333333;border-radius:5px;color:#fff;font-size:16.03px;line-height:22px;padding-left:9.5px;white-space:pre">Amazon Q Tip 1/3: Start typing to get suggestions ([ESC] to exit)</div>
<!-- scroll shadow -->
<div class="a" style="left:0;top:0;width:1422px;height:6px;background:linear-gradient(rgba(0,0,0,0.08),rgba(0,0,0,0))"></div>
</div>
<!-- ============ MINIMAP / SCROLLBAR ============ -->
<div class="a" style="left:1731px;top:403px;width:121px;height:575px;background:#fff"></div>
<div class="a" style="left:1724px;top:403px;width:8px;height:575px;background:linear-gradient(90deg,rgba(0,0,0,0),rgba(0,0,0,0.045))"></div>
<div class="a" style="left:1852px;top:403px;width:1px;height:575px;background:#ececec"></div>
<div class="a" style="left:1852px;top:403px;width:18px;height:1px;background:#ececec"></div>
<div class="a" style="left:1853px;top:587px;width:17px;height:2px;background:#333"></div>
<div class="a" style="left:1858px;top:590px;width:8px;height:8px;background:#b4b4b4"></div>
<div class="a" style="left:1732px;top:403px;width:120px;height:575px;overflow:hidden"><svg style="left:-1732px;top:-403px" width="1918" height="1079" viewBox="0 0 1918 1079"><g opacity="0.6"><rect x="1740.0" y="403.6" width="1.0" height="1.3" fill="#008000"/><rect x="1742.0" y="403.6" width="14.0" height="1.3" fill="#008000"/><rect x="1757.0" y="403.6" width="6.0" height="1.3" fill="#008000"/><rect x="1764.0" y="403.6" width="8.0" height="1.3" fill="#008000"/><rect x="1740.0" y="407.6" width="1.0" height="1.3" fill="#008000"/><rect x="1742.0" y="407.6" width="4.0" height="1.3" fill="#008000"/><rect x="1747.0" y="407.6" width="8.0" height="1.3" fill="#008000"/><rect x="1756.0" y="407.6" width="2.0" height="1.3" fill="#008000"/><rect x="1759.0" y="407.6" width="9.0" height="1.3" fill="#008000"/><rect x="1769.0" y="407.6" width="2.0" height="1.3" fill="#008000"/><rect x="1772.0" y="407.6" width="2.0" height="1.3" fill="#008000"/><rect x="1775.0" y="407.6" width="6.0" height="1.3" fill="#008000"/><rect x="1782.0" y="407.6" width="5.0" height="1.3" fill="#008000"/><rect x="1788.0" y="407.6" width="7.0" height="1.3" fill="#008000"/><rect x="1796.0" y="407.6" width="2.0" height="1.3" fill="#008000"/><rect x="1799.0" y="407.6" width="2.0" height="1.3" fill="#008000"/><rect x="1802.0" y="407.6" width="6.0" height="1.3" fill="#008000"/><rect x="1809.0" y="407.6" width="2.0" height="1.3" fill="#008000"/><rect x="1812.0" y="407.6" width="7.0" height="1.3" fill="#008000"/><rect x="1740.0" y="409.6" width="1.0" height="1.3" fill="#008000"/><rect x="1742.0" y="409.6" width="3.0" height="1.3" fill="#008000"/><rect x="1746.0" y="409.6" width="4.0" height="1.3" fill="#008000"/><rect x="1751.0" y="409.6" width="2.0" height="1.3" fill="#008000"/><rect x="1754.0" y="409.6" width="10.0" height="1.3" fill="#008000"/><rect x="1765.0" y="409.6" width="3.0" height="1.3" fill="#008000"/><rect x="1769.0" y="409.6" width="4.0" height="1.3" fill="#008000"/><rect x="1774.0" y="409.6" width="4.0" height="1.3" fill="#008000"/><rect x="1779.0" y="409.6" width="2.0" height="1.3" fill="#008000"/><rect x="1782.0" y="409.6" width="8.0" height="1.3" fill="#008000"/><rect x="1791.0" y="409.6" width="4.0" height="1.3" fill="#008000"/><rect x="1796.0" y="409.6" width="1.0" height="1.3" fill="#008000"/><rect x="1798.0" y="409.6" width="8.0" height="1.3" fill="#008000"/><rect x="1807.0" y="409.6" width="6.0" height="1.3" fill="#008000"/><rect x="1740.0" y="411.6" width="6.0" height="1.3" fill="#af00db"/><rect x="1747.0" y="411.6" width="5.0" height="1.3" fill="#3b3b3b"/><rect x="1753.0" y="411.6" width="7.0" height="1.3" fill="#3b3b3b"/><rect x="1761.0" y="411.6" width="6.0" height="1.3" fill="#3b3b3b"/><rect x="1768.0" y="411.6" width="3.0" height="1.3" fill="#3b3b3b"/><rect x="1740.0" y="413.6" width="1.0" height="1.3" fill="#008000"/><rect x="1742.0" y="413.6" width="7.0" height="1.3" fill="#008000"/><rect x="1750.0" y="413.6" width="2.0" height="1.3" fill="#008000"/><rect x="1753.0" y="413.6" width="2.0" height="1.3" fill="#008000"/><rect x="1756.0" y="413.6" width="3.0" height="1.3" fill="#008000"/><rect x="1760.0" y="413.6" width="8.0" height="1.3" fill="#008000"/><rect x="1740.0" y="415.6" width="2.0" height="1.3" fill="#3b3b3b"/><rect x="1743.0" y="415.6" width="1.0" height="1.3" fill="#3b3b3b"/><rect x="1745.0" y="415.6" width="15.0" height="1.3" fill="#3b3b3b"/><rect x="1760.0" y="415.6" width="4.0" height="1.3" fill="#a31515"/><rect x="1764.0" y="415.6" width="1.0" height="1.3" fill="#3b3b3b"/><rect x="1740.0" y="417.6" width="8.0" height="1.3" fill="#3b3b3b"/><rect x="1749.0" y="417.6" width="1.0" height="1.3" fill="#3b3b3b"/><rect x="1751.0" y="417.6" width="15.0" height="1.3" fill="#3b3b3b"/><rect x="1766.0" y="417.6" width="10.0" height="1.3" fill="#a31515"/><rect x="1776.0" y="417.6" width="1.0" height="1.3" fill="#3b3b3b"/><rect x="1740.0" y="419.6" width="1.0" height="1.3" fill="#008000"/><rect x="1742.0" y="419.6" width="7.0" height="1.3" fill="#008000"/><rect x="1750.0" y="419.6" width="2.0" height="1.3" fill="#008000"/><rect x="1753.0" y="419.6" width="3.0" height="1.3" fill="#008000"/><rect x="1757.0" y="419.6" width="8.0" height="1.3" fill="#008000"/><rect x="1766.0" y="419.6" width="6.0" height="1.3" fill="#008000"/><rect x="1740.0" y="421.6" width="14.0" height="1.3" fill="#3b3b3b"/><rect x="1755.0" y="421.6" width="1.0" height="1.3" fill="#3b3b3b"/><rect x="1757.0" y="421.6" width="15.0" height="1.3" fill="#3b3b3b"/><rect x="1772.0" y="421.6" width="11.0" height="1.3" fill="#a31515"/><rect x="1783.0" y="421.6" width="2.0" height="1.3" fill="#3b3b3b"/><rect x="1740.0" y="423.6" width="1.0" height="1.3" fill="#008000"/><rect x="1742.0" y="423.6" width="4.0" height="1.3" fill="#008000"/><rect x="1747.0" y="423.6" width="7.0" height="1.3" fill="#008000"/><rect x="1755.0" y="423.6" width="2.0" height="1.3" fill="#008000"/><rect x="1758.0" y="423.6" width="3.0" height="1.3" fill="#008000"/><rect x="1762.0" y="423.6" width="5.0" height="1.3" fill="#008000"/><rect x="1768.0" y="423.6" width="4.0" height="1.3" fill="#008000"/><rect x="1773.0" y="423.6" width="3.0" height="1.3" fill="#008000"/><rect x="1777.0" y="423.6" width="6.0" height="1.3" fill="#008000"/><rect x="1784.0" y="423.6" width="8.0" height="1.3" fill="#008000"/><rect x="1793.0" y="423.6" width="2.0" height="1.3" fill="#008000"/><rect x="1796.0" y="423.6" width="7.0" height="1.3" fill="#008000"/><rect x="1740.0" y="425.6" width="3.0" height="1.3" fill="#0000ff"/><rect x="1744.0" y="425.6" width="14.0" height="1.3" fill="#795e26"/><rect x="1758.0" y="425.6" width="1.0" height="1.3" fill="#3b3b3b"/><rect x="1759.0" y="425.6" width="5.0" height="1.3" fill="#001080"/><rect x="1764.0" y="425.6" width="1.0" height="1.3" fill="#3b3b3b"/><rect x="1766.0" y="425.6" width="7.0" height="1.3" fill="#001080"/><rect x="1773.0" y="425.6" width="2.0" height="1.3" fill="#3b3b3b"/><rect x="1742.0" y="427.6" width="1.0" height="1.3" fill="#008000"/><rect x="1744.0" y="427.6" width="4.0" height="1.3" fill="#008000"/><rect x="1749.0" y="427.6" width="3.0" height="1.3" fill="#008000"/><rect x="1753.0" y="427.6" width="8.0" height="1.3" fill="#008000"/><rect x="1762.0" y="427.6" width="5.0" height="1.3" fill="#008000"/><rect x="1768.0" y="427.6" width="2.0" height="1.3" fill="#008000"/><rect x="1771.0" y="427.6" width="3.0" height="1.3" fill="#008000"/><rect x="1775.0" y="427.6" width="5.0" height="1.3" fill="#008000"/><rect x="1781.0" y="427.6" width="3.0" height="1.3" fill="#008000"/><rect x="1742.0" y="429.6" width="5.0" height="1.3" fill="#795e26"/><rect x="1747.0" y="429.6" width="1.0" height="1.3" fill="#3b3b3b"/><rect x="1748.0" y="429.6" width="6.0" height="1.3" fill="#a31515"/><rect x="1755.0" y="429.6" width="8.0" height="1.3" fill="#a31515"/><rect x="1764.0" y="429.6" width="2.0" height="1.3" fill="#a31515"/><rect x="1767.0" y="429.6" width="6.0" height="1.3" fill="#a31515"/><rect x="1774.0" y="429.6" width="9.0" height="1.3" fill="#a31515"/><rect x="1784.0" y="429.6" width="1.0" height="1.3" fill="#a31515"/><rect x="1786.0" y="429.6" width="1.0" height="1.3" fill="#3b3b3b"/><rect x="1788.0" y="429.6" width="17.0" height="1.3" fill="#3b3b3b"/><rect x="1806.0" y="429.6" width="6.0" height="1.3" fill="#001080"/><rect x="1812.0" y="429.6" width="1.0" height="1.3" fill="#3b3b3b"/><rect x="1813.0" y="429.6" width="1.0" height="1.3" fill="#098658"/><rect x="1814.0" y="429.6" width="2.0" height="1.3" fill="#3b3b3b"/><rect x="1742.0" y="431.6" width="1.0" height="1.3" fill="#008000"/><rect x="1744.0" y="431.6" width="3.0" height="1.3" fill="#008000"/><rect x="1748.0" y="431.6" width="3.0" height="1.3" fill="#008000"/><rect x="1752.0" y="431.6" width="6.0" height="1.3" fill="#008000"/><rect x="1759.0" y="431.6" width="3.0" height="1.3" fill="#008000"/><rect x="1763.0" y="431.6" width="6.0" height="1.3" fill="#008000"/><rect x="1770.0" y="431.6" width="3.0" height="1.3" fill="#008000"/><rect x="1774.0" y="431.6" width="4.0" height="1.3" fill="#008000"/><rect x="1779.0" y="431.6" width="3.0" height="1.3" fill="#008000"/><rect x="1783.0" y="431.6" width="5.0" height="1.3" fill="#008000"/><rect x="1742.0" y="433.6" width="6.0" height="1.3" fill="#3b3b3b"/><rect x="1749.0" y="433.6" width="1.0" height="1.3" fill="#3b3b3b"/><rect x="1751.0" y="433.6" width="6.0" height="1.3" fill="#3b3b3b"/><rect x="1757.0" y="433.6" width="9.0" height="1.3" fill="#a31515"/><rect x="1766.0" y="433.6" width="2.0" height="1.3" fill="#3b3b3b"/><rect x="1768.0" y="433.6" width="1.0" height="1.3" fill="#098658"/><rect x="1769.0" y="433.6" width="2.0" height="1.3" fill="#3b3b3b"/><rect x="1771.0" y="433.6" width="4.0" height="1.3" fill="#a31515"/><rect x="1775.0" y="433.6" width="2.0" height="1.3" fill="#3b3b3b"/><rect x="1777.0" y="433.6" width="8.0" height="1.3" fill="#a31515"/><rect x="1785.0" y="433.6" width="2.0" height="1.3" fill="#3b3b3b"/><rect x="1787.0" y="433.6" width="6.0" height="1.3" fill="#a31515"/><rect x="1793.0" y="433.6" width="1.0" height="1.3" fill="#3b3b3b"/><rect x="1742.0" y="435.6" width="3.0" height="1.3" fill="#3b3b3b"/><rect x="1746.0" y="435.6" width="1.0" height="1.3" fill="#3b3b3b"/><rect x="1748.0" y="435.6" width="32.0" height="1.3" fill="#3b3b3b"/><rect x="1780.0" y="435.6" width="9.0" height="1.3" fill="#a31515"/><rect x="1789.0" y="435.6" width="2.0" height="1.3" fill="#3b3b3b"/><rect x="1791.0" y="435.6" width="1.0" height="1.3" fill="#098658"/><rect x="1792.0" y="435.6" width="2.0" height="1.3" fill="#3b3b3b"/><rect x="1794.0" y="435.6" width="4.0" height="1.3" fill="#a31515"/><rect x="1798.0" y="435.6" width="2.0" height="1.3" fill="#3b3b3b"/><rect x="1800.0" y="435.6" width="8.0" height="1.3" fill="#a31515"/><rect x="1808.0" y="435.6" width="2.0" height="1.3" fill="#3b3b3b"/><rect x="1810.0" y="435.6" width="5.0" height="1.3" fill="#a31515"/><rect x="1815.0" y="435.6" width="2.0" height="1.3" fill="#3b3b3b"/><rect x="1742.0" y="437.6" width="13.0" height="1.3" fill="#3b3b3b"/><rect x="1756.0" y="437.6" width="1.0" height="1.3" fill="#3b3b3b"/><rect x="1758.0" y="437.6" width="20.0" height="1.3" fill="#a31515"/><rect x="1742.0" y="439.6" width="1.0" height="1.3" fill="#008000"/><rect x="1744.0" y="439.6" width="8.0" height="1.3" fill="#008000"/><rect x="1753.0" y="439.6" width="3.0" height="1.3" fill="#008000"/><rect x="1757.0" y="439.6" width="4.0" height="1.3" fill="#008000"/><rect x="1762.0" y="439.6" width="4.0" height="1.3" fill="#008000"/><rect x="1767.0" y="439.6" width="2.0" height="1.3" fill="#008000"/><rect x="1770.0" y="439.6" width="2.0" height="1.3" fill="#008000"/><rect x="1773.0" y="439.6" width="3.0" height="1.3" fill="#008000"/><rect x="1777.0" y="439.6" width="5.0" height="1.3" fill="#008000"/><rect x="1783.0" y="439.6" width="10.0" height="1.3" fill="#008000"/><rect x="1742.0" y="441.6" width="3.0" height="1.3" fill="#af00db"/><rect x="1745.0" y="441.6" width="1.0" height="1.3" fill="#3b3b3b"/><rect x="1744.0" y="443.6" width="36.0" height="1.3" fill="#3b3b3b"/><rect x="1781.0" y="443.6" width="4.0" height="1.3" fill="#3b3b3b"/><rect x="1786.0" y="443.6" width="14.0" height="1.3" fill="#3b3b3b"/><rect x="1742.0" y="445.6" width="6.0" height="1.3" fill="#af00db"/><rect x="1749.0" y="445.6" width="9.0" height="1.3" fill="#267f99"/><rect x="1759.0" y="445.6" width="2.0" height="1.3" fill="#af00db"/><rect x="1762.0" y="445.6" width="2.0" height="1.3" fill="#3b3b3b"/><rect x="1744.0" y="447.6" width="5.0" height="1.3" fill="#795e26"/><rect x="1749.0" y="447.6" width="3.0" height="1.3" fill="#3b3b3b"/><rect x="1744.0" y="449.6" width="5.0" height="1.3" fill="#795e26"/><rect x="1749.0" y="449.6" width="1.0" height="1.3" fill="#3b3b3b"/><rect x="1750.0" y="449.6" width="6.0" height="1.3" fill="#a31515"/><rect x="1757.0" y="449.6" width="7.0" height="1.3" fill="#a31515"/><rect x="1765.0" y="449.6" width="6.0" height="1.3" fill="#a31515"/><rect x="1772.0" y="449.6" width="2.0" height="1.3" fill="#0000ff"/><rect x="1775.0" y="449.6" width="4.0" height="1.3" fill="#a31515"/><rect x="1780.0" y="449.6" width="6.0" height="1.3" fill="#a31515"/><rect x="1787.0" y="449.6" width="2.0" height="1.3" fill="#0000ff"/><rect x="1789.0" y="449.6" width="1.0" height="1.3" fill="#a31515"/><rect x="1791.0" y="449.6" width="4.0" height="1.3" fill="#a31515"/><rect x="1796.0" y="449.6" width="4.0" height="1.3" fill="#a31515"/><rect x="1801.0" y="449.6" width="4.0" height="1.3" fill="#a31515"/><rect x="1806.0" y="449.6" width="5.0" height="1.3" fill="#a31515"/><rect x="1812.0" y="449.6" width="3.0" height="1.3" fill="#a31515"/><rect x="1816.0" y="449.6" width="4.0" height="1.3" fill="#a31515"/><rect x="1821.0" y="449.6" width="6.0" height="1.3" fill="#a31515"/><rect x="1828.0" y="449.6" width="2.0" height="1.3" fill="#a31515"/><rect x="1831.0" y="449.6" width="2.0" height="1.3" fill="#a31515"/><rect x="1834.0" y="449.6" width="3.0" height="1.3" fill="#a31515"/><rect x="1838.0" y="449.6" width="4.0" height="1.3" fill="#a31515"/><rect x="1843.0" y="449.6" width="6.0" height="1.3" fill="#a31515"/><rect x="1850.0" y="449.6" width="2.0" height="1.3" fill="#a31515"/><rect x="1853.0" y="449.6" width="4.0" height="1.3" fill="#a31515"/><rect x="1858.0" y="449.6" width="10.0" height="1.3" fill="#a31515"/><rect x="1868.0" y="449.6" width="12.0" height="1.3" fill="#3b3b3b"/><rect x="1881.0" y="449.6" width="8.0" height="1.3" fill="#3b3b3b"/><rect x="1744.0" y="451.6" width="5.0" height="1.3" fill="#af00db"/><rect x="1750.0" y="451.6" width="1.0" height="1.3" fill="#3b3b3b"/><rect x="1742.0" y="453.6" width="1.0" height="1.3" fill="#008000"/><rect x="1744.0" y="453.6" width="4.0" height="1.3" fill="#008000"/><rect x="1749.0" y="453.6" width="3.0" height="1.3" fill="#008000"/><rect x="1753.0" y="453.6" width="9.0" height="1.3" fill="#008000"/><rect x="1763.0" y="453.6" width="3.0" height="1.3" fill="#008000"/><rect x="1767.0" y="453.6" width="4.0" height="1.3" fill="#008000"/><rect x="1742.0" y="455.6" width="4.0" height="1.3" fill="#af00db"/><rect x="1747.0" y="455.6" width="4.0" height="1.3" fill="#795e26"/><rect x="1751.0" y="455.6" width="15.0" height="1.3" fill="#3b3b3b"/><rect x="1767.0" y="455.6" width="2.0" height="1.3" fill="#af00db"/><rect x="1770.0" y="455.6" width="8.0" height="1.3" fill="#3b3b3b"/><rect x="1744.0" y="457.6" width="6.0" height="1.3" fill="#3b3b3b"/><rect x="1751.0" y="457.6" width="1.0" height="1.3" fill="#3b3b3b"/><rect x="1753.0" y="457.6" width="23.0" height="1.3" fill="#3b3b3b"/><rect x="1777.0" y="457.6" width="9.0" height="1.3" fill="#001080"/><rect x="1786.0" y="457.6" width="1.0" height="1.3" fill="#3b3b3b"/><rect x="1787.0" y="457.6" width="3.0" height="1.3" fill="#a31515"/><rect x="1790.0" y="457.6" width="1.0" height="1.3" fill="#3b3b3b"/><rect x="1744.0" y="459.6" width="1.0" height="1.3" fill="#008000"/><rect x="1746.0" y="459.6" width="4.0" height="1.3" fill="#008000"/><rect x="1751.0" y="459.6" width="4.0" height="1.3" fill="#008000"/><rect x="1756.0" y="459.6" width="3.0" height="1.3" fill="#008000"/><rect x="1760.0" y="459.6" width="2.0" height="1.3" fill="#008000"/><rect x="1763.0" y="459.6" width="3.0" height="1.3" fill="#008000"/><rect x="1767.0" y="459.6" width="4.0" height="1.3" fill="#008000"/><rect x="1744.0" y="461.6" width="8.0" height="1.3" fill="#3b3b3b"/><rect x="1753.0" y="461.6" width="1.0" height="1.3" fill="#3b3b3b"/><rect x="1755.0" y="461.6" width="1.0" height="1.3" fill="#098658"/><rect x="1744.0" y="463.6" width="3.0" height="1.3" fill="#af00db"/><rect x="1748.0" y="463.6" width="3.0" height="1.3" fill="#3b3b3b"/><rect x="1752.0" y="463.6" width="2.0" height="1.3" fill="#af00db"/><rect x="1755.0" y="463.6" width="7.0" height="1.3" fill="#3b3b3b"/><rect x="1746.0" y="465.6" width="8.0" height="1.3" fill="#3b3b3b"/><rect x="1755.0" y="465.6" width="2.0" height="1.3" fill="#3b3b3b"/><rect x="1758.0" y="465.6" width="1.0" height="1.3" fill="#098658"/><rect x="1746.0" y="467.6" width="1.0" height="1.3" fill="#008000"/><rect x="1748.0" y="467.6" width="4.0" height="1.3" fill="#008000"/><rect x="1753.0" y="467.6" width="3.0" height="1.3" fill="#008000"/><rect x="1757.0" y="467.6" width="3.0" height="1.3" fill="#008000"/><rect x="1761.0" y="467.6" width="2.0" height="1.3" fill="#008000"/><rect x="1764.0" y="467.6" width="3.0" height="1.3" fill="#008000"/><rect x="1768.0" y="467.6" width="5.0" height="1.3" fill="#008000"/><rect x="1774.0" y="467.6" width="3.0" height="1.3" fill="#008000"/><rect x="1746.0" y="469.6" width="5.0" height="1.3" fill="#795e26"/><rect x="1751.0" y="469.6" width="5.0" height="1.3" fill="#3b3b3b"/><rect x="1756.0" y="469.6" width="7.0" height="1.3" fill="#a31515"/><rect x="1763.0" y="469.6" width="2.0" height="1.3" fill="#3b3b3b"/><rect x="1766.0" y="469.6" width="4.0" height="1.3" fill="#3b3b3b"/><rect x="1770.0" y="469.6" width="6.0" height="1.3" fill="#a31515"/><rect x="1776.0" y="469.6" width="2.0" height="1.3" fill="#3b3b3b"/><rect x="1779.0" y="469.6" width="4.0" height="1.3" fill="#3b3b3b"/><rect x="1783.0" y="469.6" width="7.0" height="1.3" fill="#a31515"/><rect x="1790.0" y="469.6" width="2.0" height="1.3" fill="#3b3b3b"/><rect x="1746.0" y="471.6" width="3.0" height="1.3" fill="#af00db"/><rect x="1749.0" y="471.6" width="1.0" height="1.3" fill="#3b3b3b"/><rect x="1748.0" y="473.6" width="1.0" height="1.3" fill="#008000"/><rect x="1750.0" y="473.6" width="6.0" height="1.3" fill="#008000"/><rect x="1757.0" y="473.6" width="6.0" height="1.3" fill="#008000"/><rect x="1764.0" y="473.6" width="4.0" height="1.3" fill="#008000"/><rect x="1769.0" y="473.6" width="3.0" height="1.3" fill="#008000"/><rect x="1773.0" y="473.6" width="5.0" height="1.3" fill="#008000"/><rect x="1779.0" y="473.6" width="4.0" height="1.3" fill="#008000"/><rect x="1784.0" y="473.6" width="3.0" height="1.3" fill="#008000"/><rect x="1788.0" y="473.6" width="9.0" height="1.3" fill="#008000"/><rect x="1798.0" y="473.6" width="5.0" height="1.3" fill="#008000"/><rect x="1748.0" y="475.6" width="24.0" height="1.3" fill="#3b3b3b"/><rect x="1750.0" y="477.6" width="4.0" height="1.3" fill="#001080"/><rect x="1754.0" y="477.6" width="2.0" height="1.3" fill="#3b3b3b"/><rect x="1752.0" y="479.6" width="7.0" height="1.3" fill="#a31515"/><rect x="1759.0" y="479.6" width="1.0" height="1.3" fill="#3b3b3b"/><rect x="1761.0" y="479.6" width="4.0" height="1.3" fill="#3b3b3b"/><rect x="1765.0" y="479.6" width="7.0" height="1.3" fill="#a31515"/><rect x="1772.0" y="479.6" width="2.0" height="1.3" fill="#3b3b3b"/><rect x="1752.0" y="481.6" width="6.0" height="1.3" fill="#a31515"/><rect x="1758.0" y="481.6" width="1.0" height="1.3" fill="#3b3b3b"/><rect x="1760.0" y="481.6" width="4.0" height="1.3" fill="#3b3b3b"/><rect x="1764.0" y="481.6" width="6.0" height="1.3" fill="#a31515"/><rect x="1770.0" y="481.6" width="2.0" height="1.3" fill="#3b3b3b"/><rect x="1752.0" y="483.6" width="7.0" height="1.3" fill="#a31515"/><rect x="1759.0" y="483.6" width="1.0" height="1.3" fill="#3b3b3b"/><rect x="1761.0" y="483.6" width="3.0" height="1.3" fill="#267f99"/><rect x="1764.0" y="483.6" width="5.0" height="1.3" fill="#3b3b3b"/><rect x="1769.0" y="483.6" width="7.0" height="1.3" fill="#a31515"/><rect x="1776.0" y="483.6" width="4.0" height="1.3" fill="#3b3b3b"/><rect x="1746.0" y="485.6" width="6.0" height="1.3" fill="#af00db"/><rect x="1753.0" y="485.6" width="9.0" height="1.3" fill="#267f99"/><rect x="1763.0" y="485.6" width="2.0" height="1.3" fill="#af00db"/><rect x="1766.0" y="485.6" width="2.0" height="1.3" fill="#3b3b3b"/><rect x="1748.0" y="487.6" width="5.0" height="1.3" fill="#795e26"/><rect x="1753.0" y="487.6" width="3.0" height="1.3" fill="#3b3b3b"/><rect x="1748.0" y="489.6" width="5.0" height="1.3" fill="#795e26"/><rect x="1753.0" y="489.6" width="1.0" height="1.3" fill="#3b3b3b"/><rect x="1754.0" y="489.6" width="7.0" height="1.3" fill="#a31515"/><rect x="1762.0" y="489.6" width="2.0" height="1.3" fill="#a31515"/><rect x="1765.0" y="489.6" width="6.0" height="1.3" fill="#a31515"/><rect x="1772.0" y="489.6" width="4.0" height="1.3" fill="#a31515"/><rect x="1777.0" y="489.6" width="4.0" height="1.3" fill="#a31515"/><rect x="1782.0" y="489.6" width="8.0" height="1.3" fill="#a31515"/><rect x="1791.0" y="489.6" width="6.0" height="1.3" fill="#a31515"/><rect x="1797.0" y="489.6" width="12.0" height="1.3" fill="#3b3b3b"/><rect x="1744.0" y="491.6" width="1.0" height="1.3" fill="#008000"/><rect x="1746.0" y="491.6" width="9.0" height="1.3" fill="#008000"/><rect x="1744.0" y="493.6" width="6.0" height="1.3" fill="#af00db"/><rect x="1751.0" y="493.6" width="3.0" height="1.3" fill="#a31515"/><rect x="1755.0" y="493.6" width="6.0" height="1.3" fill="#a31515"/><rect x="1762.0" y="493.6" width="9.0" height="1.3" fill="#a31515"/><rect x="1772.0" y="493.6" width="1.0" height="1.3" fill="#3b3b3b"/><rect x="1774.0" y="493.6" width="8.0" height="1.3" fill="#3b3b3b"/></g></svg></div><!-- ============ FOOTER ============ -->
<div class="a" style="left:0;top:978px;width:1902px;height:42px;background:#161d26"></div>
<svg style="left:20px;top:990px" width="20" height="20" viewBox="0 0 20 20"><rect x="1" y="1" width="18" height="18" rx="3" fill="none" stroke="#f2f3f3" stroke-width="1.8"/><path d="M5 6l4 3.5L5 13M10.5 14h4.5" fill="none" stroke="#f2f3f3" stroke-width="1.8" stroke-linecap="round" stroke-linejoin="round"/></svg>
<div class="t" style="left:46px;top:993px;font-size:14.1px;font-weight:bold;color:#f6f7f8">CloudShell</div>
<div class="t" style="left:151px;top:993px;font-size:13.8px;font-weight:bold;color:#f6f7f8">Feedback</div>
<div class="t" style="left:1219px;top:992px;font-size:15.1px;color:#d5d9de">© 2025, Amazon Web Services, Inc. or its affiliates.</div>
<div class="t" style="left:1600px;top:993px;font-size:13.6px;font-weight:bold;color:#f6f7f8">Privacy</div>
<div class="t" style="left:1680px;top:993px;font-size:14px;font-weight:bold;color:#f6f7f8">Terms</div>
<div class="t" style="left:1753px;top:993px;font-size:13.95px;font-weight:bold;color:#f6f7f8">Cookie preferences</div>

<!-- ============ PAGE SCROLLBAR ============ -->
<div class="a" style="left:1901px;top:144px;width:17px;height:876px;background:#2c2c2c"></div>
<svg style="left:1905px;top:150px" width="12" height="10" viewBox="0 0 12 10"><path d="M6 0.5L11.5 9.5H0.5z" fill="#a3a3a3"/></svg>
<div class="a" style="left:1905px;top:427px;width:11px;height:304px;background:#9e9e9e;border-radius:6px"></div>
<svg style="left:1905px;top:1005px" width="12" height="10" viewBox="0 0 12 10"><path d="M0.5 0.5h11L6 9.5z" fill="#a3a3a3"/></svg>

<!-- ============ TASKBAR ============ -->
<div class="a" style="left:0;top:1020px;width:1918px;height:59px;background:linear-gradient(90deg,#1e1d24 0%,#211c23 14%,#361a21 19%,#3e1a20 22%,#3a1826 28%,#2c1c25 36%,#221f26 42%,#221f26 62%,#2c1d25 71%,#381a26 80%,#3e1a23 90%,#44181f 100%)"></div>
<div class="a" style="left:0;top:1020px;width:1918px;height:1px;background:#3a3a40;opacity:.6"></div>
<!-- start -->
<svg style="left:25px;top:1035px" width="30" height="30" viewBox="0 0 30 30"><defs><linearGradient id="wg" x1="0" y1="0" x2="1" y2="1"><stop offset="0" stop-color="#7fdcff"/><stop offset="1" stop-color="#1291e8"/></linearGradient></defs><rect x="0" y="0" width="14.2" height="14.2" rx="1" fill="url(#wg)"/><rect x="15.8" y="0" width="14.2" height="14.2" rx="1" fill="url(#wg)"/><rect x="0" y="15.8" width="14.2" height="14.2" rx="1" fill="url(#wg)"/><rect x="15.8" y="15.8" width="14.2" height="14.2" rx="1" fill="url(#wg)"/></svg>
<svg style="left:84px;top:1036px" width="27" height="28" viewBox="0 0 27 28"><circle cx="11" cy="11" r="9" fill="none" stroke="#e6e6e6" stroke-width="3"/><path d="M17.5 17.5l7.5 8" stroke="#e6e6e6" stroke-width="3.2" stroke-linecap="round"/></svg>
<svg style="left:136px;top:1035px" width="32" height="29" viewBox="0 0 32 29"><rect x="0" y="10" width="22" height="19" rx="2" fill="#5e5e62"/><rect x="10" y="0" width="21" height="19" rx="2" fill="#f2f2f2"/><rect x="10" y="10" width="12" height="9" fill="#b7b7ba"/></svg>
<svg style="left:192px;top:1036px" width="30" height="28" viewBox="0 0 30 28"><defs><linearGradient id="cp1" x1="0" y1="0" x2="1" y2="1"><stop offset="0" stop-color="#2fa2ff"/><stop offset=".5" stop-color="#9b5cff"/><stop offset="1" stop-color="#ff6ab0"/></linearGradient><linearGradient id="cp2" x1="0" y1="1" x2="1" y2="0"><stop offset="0" stop-color="#ffb900"/><stop offset=".5" stop-color="#ff6a3d"/><stop offset="1" stop-color="#d35bff"/></linearGradient></defs><path d="M9 1h10q3 0 4 3l-6 20q-1 3-4 3H4q-3 0-2-3l5-19q1-4 2-4z" fill="url(#cp1)"/><path d="M11 4h14q4 0 3 4l-4 15q-1 4-4 4H9l7-20q1-3 -5-3z" fill="url(#cp2)" opacity=".85"/></svg>
<svg style="left:246px;top:1032px" width="31" height="33" viewBox="0 0 31 33"><path d="M9 7V4a6.5 6.5 0 0 1 13 0v3" fill="none" stroke="#2aa0e0" stroke-width="2.2"/><rect x="0.5" y="6" width="30" height="26" rx="4" fill="#f3f3f3"/><rect x="9.5" y="13" width="5.5" height="5.5" fill="#f25022"/><rect x="16" y="13" width="5.5" height="5.5" fill="#7fba00"/><rect x="9.5" y="19.5" width="5.5" height="5.5" fill="#00a4ef"/><rect x="16" y="19.5" width="5.5" height="5.5" fill="#ffb900"/></svg>
<svg style="left:301px;top:1035px" width="31" height="31" viewBox="0 0 31 31"><defs><linearGradient id="eg" x1="0" y1="0" x2="1" y2="1"><stop offset="0" stop-color="#35c1f1"/><stop offset=".6" stop-color="#2ecf8a"/><stop offset="1" stop-color="#1f6dc2"/></linearGradient></defs><path d="M15.5 0.5C7 0.5 0.5 7 0.5 15.5c0 8.5 7 15 15 15 5.5 0 10-3 12.5-6.5-2 1-4 1.5-6 1.5-6 0-10.5-4-10.5-8.5 0-3 2.5-5 5.5-5 4.5 0 7 3 7 6.5h5.5c.5-1 .5-2 .5-3C30.5 6.5 24 .5 15.5.5z" fill="url(#eg)"/><path d="M0.5 15.5c0 8.5 7 15 15 15 2 0 4-.5 5-1-7-1-11-6-11-11.5 0-2 .5-3.5 1.5-5C6 12 2 13 .5 15.5z" fill="#0c59a4"/></svg>
<svg style="left:356px;top:1035px" width="31" height="29" viewBox="0 0 31 29"><path d="M0.5 3a2 2 0 0 1 2-2h9l3 3h14a2 2 0 0 1 2 2v21a2 2 0 0 1-2 2h-26a2 2 0 0 1-2-2z" fill="#e8a512"/><path d="M0.5 8h30v19a2 2 0 0 1-2 2h-26a2 2 0 0 1-2-2z" fill="#ffd23f"/><rect x="8" y="21" width="15" height="5" rx="1" fill="#1e88e5"/></svg>
<svg style="left:415px;top:1033px" width="24" height="32" viewBox="0 0 24 32"><rect x="0.5" y="3" width="23" height="28" rx="1.5" fill="#44aee6"/><rect x="0.5" y="28" width="23" height="3" fill="#c26a2a"/><path d="M5 10h14M5 14.5h14M5 19h14M5 23.5h10" stroke="#163f66" stroke-width="1.6"/><path d="M4 1v4M8 1v4M12 1v4M16 1v4M20 1v4" stroke="#dff2ff" stroke-width="1.5"/></svg>
<svg style="left:466px;top:1035px" width="31" height="31" viewBox="0 0 31 31"><circle cx="15.5" cy="15.5" r="15" fill="#4fa4b8"/><circle cx="15.5" cy="15.5" r="12.5" fill="#f0f0f0"/><path d="M8 10q4-6 11-3 5 3 4 9l-3 8q-3 2-5 0l-3-6q-4-2-4-8z" fill="#333"/><circle cx="17" cy="12" r="2" fill="#fff"/></svg>
<svg style="left:521px;top:1033px" width="31" height="33" viewBox="0 0 31 33"><path d="M15.5 1L30 16.5 15.5 32 1 16.5z" fill="#3e78e0"/><path d="M15.5 1L30 16.5H15.5z" fill="#f05033"/><path d="M1 16.5h14.5V32z" fill="#8bc34a"/><path d="M15.5 16.5H30L15.5 32z" fill="#ffc107"/><path d="M11 8l9 9M15.5 12.5v12" stroke="#222" stroke-width="2"/><circle cx="15.5" cy="12.5" r="2.2" fill="#222"/><circle cx="20" cy="17" r="2.2" fill="#222"/><circle cx="15.5" cy="24.5" r="2.2" fill="#222"/></svg>
<svg style="left:578px;top:1037px" width="26" height="26" viewBox="0 0 26 26" fill="#a8a8a8"><circle cx="13" cy="13" r="2"/><circle cx="13" cy="6.5" r="1.6"/><circle cx="13" cy="19.5" r="1.6"/><circle cx="6.5" cy="13" r="1.6"/><circle cx="19.5" cy="13" r="1.6"/><circle cx="8.4" cy="8.4" r="1.5"/><circle cx="17.6" cy="8.4" r="1.5"/><circle cx="8.4" cy="17.6" r="1.5"/><circle cx="17.6" cy="17.6" r="1.5"/><circle cx="13" cy="1.5" r="1.2"/><circle cx="13" cy="24.5" r="1.2"/><circle cx="1.5" cy="13" r="1.2"/><circle cx="24.5" cy="13" r="1.2"/><circle cx="4.9" cy="4.9" r="1.2"/><circle cx="21.1" cy="4.9" r="1.2"/><circle cx="4.9" cy="21.1" r="1.2"/><circle cx="21.1" cy="21.1" r="1.2"/><circle cx="7" cy="2.8" r="1"/><circle cx="19" cy="2.8" r="1"/><circle cx="7" cy="23.2" r="1"/><circle cx="19" cy="23.2" r="1"/><circle cx="2.8" cy="7" r="1"/><circle cx="23.2" cy="7" r="1"/><circle cx="2.8" cy="19" r="1"/><circle cx="23.2" cy="19" r="1"/></svg>
<svg style="left:631px;top:1035px" width="30" height="31" viewBox="0 0 30 31"><path d="M1 5h17l4 4v21H3z" fill="#e9eef0"/><path d="M2.5 14q8-4 18 0v15h-17z" fill="#5cc12a"/><path d="M4 12q7-3 16 1v3q-8-3-16 0z" fill="#d7e94a"/><path d="M27 2l-13 25" stroke="#e0a40e" stroke-width="2.5"/></svg>
<svg style="left:686px;top:1035px" width="31" height="31" viewBox="0 0 31 31"><circle cx="15.5" cy="15.5" r="15" fill="#ff6c37"/><path d="M9 23l10-10M17 9l5 5" stroke="#fff" stroke-width="2.5" stroke-linecap="round"/></svg>
<svg style="left:741px;top:1036px" width="31" height="28" viewBox="0 0 31 28"><ellipse cx="15.5" cy="17" rx="13" ry="9" fill="#6b9c2c"/><ellipse cx="15.5" cy="11" rx="10" ry="7" fill="#8cc43a"/><circle cx="10" cy="7" r="3.5" fill="#c8e26a"/><circle cx="21" cy="7" r="3.5" fill="#c8e26a"/><circle cx="10" cy="7" r="1.5" fill="#222"/><circle cx="21" cy="7" r="1.5" fill="#222"/></svg>
<svg style="left:796px;top:1038px" width="28" height="24" viewBox="0 0 28 24"><rect x="0.5" y="0.5" width="27" height="23" rx="1" fill="#0c0c0c" stroke="#9a9a9a" stroke-width="1"/><rect x="0.5" y="0.5" width="27" height="3" fill="#cfcfcf"/><path d="M4 7l2 1.5L4 10M7 10h4" stroke="#cfcfcf" stroke-width="1"/></svg>
<div class="a" style="left:843px;top:1026px;width:43px;height:49px;background:rgba(255,255,255,0.07);border-radius:5px"></div>
<svg style="left:852px;top:1035px" width="27" height="31" viewBox="0 0 27 31"><path d="M4 3l4.5-2.5h10L23 3l3.5 3.5-1.3 4 .8 3.3-2.8 9.7-5 4.3-4.7 3.2-4.7-3.2-5-4.3L1 13.8l.8-3.3-1.3-4z" fill="#ff5126"/><path d="M8 12l3 1.3 2.5-2 2.5 2L19 12l-1.2 5.4-4.3 4-4.3-4z" fill="#fff"/><path d="M9 8l4.5 1.5L18 8" stroke="#fff" stroke-width="1.5" fill="none"/></svg>
<div class="a" style="left:856px;top:1070px;width:20px;height:3px;background:#f2715b;border-radius:2px"></div>
<svg style="left:905px;top:1035px" width="31" height="30" viewBox="0 0 31 30"><circle cx="24" cy="10" r="4" fill="#7b83eb"/><rect x="17" y="14" width="13" height="12" rx="5" fill="#7b83eb"/><circle cx="16" cy="7" r="5" fill="#5059c9"/><rect x="8" y="13" width="16" height="15" rx="6" fill="#5059c9"/><rect x="0.5" y="8" width="15" height="15" rx="2" fill="#4b53bc"/><path d="M4 12h8M8 12v8" stroke="#fff" stroke-width="2"/></svg>
<div class="a" style="left:922px;top:1028px;width:21px;height:20px;border-radius:10px;background:#c4314b;color:#fff;font-size:12px;line-height:20px;text-align:center">9+</div>
<div class="a" style="left:313px;top:1070px;width:7px;height:3px;background:#9d9d9d;border-radius:2px"></div>
<div class="a" style="left:368px;top:1070px;width:7px;height:3px;background:#9d9d9d;border-radius:2px"></div>
<div class="a" style="left:423px;top:1070px;width:7px;height:3px;background:#9d9d9d;border-radius:2px"></div>
<div class="a" style="left:478px;top:1070px;width:7px;height:3px;background:#9d9d9d;border-radius:2px"></div>
<div class="a" style="left:533px;top:1070px;width:7px;height:3px;background:#9d9d9d;border-radius:2px"></div>
<div class="a" style="left:588px;top:1070px;width:7px;height:3px;background:#9d9d9d;border-radius:2px"></div>
<div class="a" style="left:643px;top:1070px;width:7px;height:3px;background:#9d9d9d;border-radius:2px"></div>
<div class="a" style="left:698px;top:1070px;width:7px;height:3px;background:#9d9d9d;border-radius:2px"></div>
<div class="a" style="left:753px;top:1070px;width:7px;height:3px;background:#9d9d9d;border-radius:2px"></div>
<div class="a" style="left:808px;top:1070px;width:7px;height:3px;background:#9d9d9d;border-radius:2px"></div>
<div class="a" style="left:918px;top:1070px;width:7px;height:3px;background:#9d9d9d;border-radius:2px"></div>
<!-- tray -->
<svg style="left:1360px;top:1037px" width="26" height="26" viewBox="0 0 26 26"><defs><radialGradient id="og" cx=".35" cy=".35" r=".8"><stop offset="0" stop-color="#ffc23a"/><stop offset="1" stop-color="#f26a1b"/></radialGradient></defs><circle cx="13" cy="13" r="12.5" fill="url(#og)"/></svg>
<div class="a" style="left:1372px;top:1030px;width:19px;height:19px;border-radius:50%;background:#f7a9b8;color:#3a1a22;font-size:12.5px;line-height:19px;text-align:center">2</div>
<svg style="left:1426px;top:1045px" width="15" height="9" viewBox="0 0 15 9"><path d="M1 8l6.5-6.5L14 8" fill="none" stroke="#eee" stroke-width="1.8"/></svg>
<svg style="left:1462px;top:1039px" width="23" height="22" viewBox="0 0 23 22"><path d="M4 9a8 8 0 0 1 14-3M19 13a8 8 0 0 1-14 3" fill="none" stroke="#e6e6e6" stroke-width="1.7"/><path d="M18.5 2v4.5H14M4.5 20v-4.5H9" fill="none" stroke="#e6e6e6" stroke-width="1.7"/><circle cx="17.5" cy="16.5" r="4.5" fill="#ff8c00"/></svg>
<svg style="left:1502px;top:1039px" width="23" height="22" viewBox="0 0 23 22"><path d="M5 17a4.5 4.5 0 0 1 0-9 6 6 0 0 1 11.5 1 3.5 3.5 0 0 1 .5 7z" fill="#d8d8d8"/><circle cx="16.5" cy="16" r="5.5" fill="#b8860b"/><path d="M16.5 13v3.5M16.5 18v.8" stroke="#fff" stroke-width="1.5"/></svg>
<svg style="left:1542px;top:1040px" width="23" height="20" viewBox="0 0 23 20"><path d="M5 16a4.5 4.5 0 0 1 0-9 6.5 6.5 0 0 1 12.5 1 4 4 0 0 1 .5 8z" fill="#3b9ae8"/><path d="M2 2l19 16" stroke="#1c1c22" stroke-width="2.5"/><path d="M2 2l19 16" stroke="#3b9ae8" stroke-width="1"/></svg>
<svg style="left:1582px;top:1037px" width="23" height="25" viewBox="0 0 23 25"><path d="M6 11V7a5.5 5.5 0 0 1 11 0v4" fill="none" stroke="#bfa23a" stroke-width="2.2"/><rect x="2" y="10" width="19" height="13" rx="2" fill="#e8c53a"/><circle cx="17" cy="20" r="4.5" fill="#8a8a8a"/><path d="M14.5 22.5l5-5" stroke="#fff" stroke-width="1.3"/></svg>
<div class="a" style="left:1614px;top:1026px;width:39px;height:48px;background:rgba(255,255,255,0.08);border:1px solid rgba(255,255,255,0.06);border-radius:5px"></div>
<svg style="left:1624px;top:1038px" width="19" height="24" viewBox="0 0 19 24"><rect x="6" y="1" width="7" height="13" rx="3.5" fill="#e6e6e6"/><path d="M2.5 10.5a7 7 0 0 0 14 0M9.5 17.5V22M5.5 22h8" fill="none" stroke="#e6e6e6" stroke-width="1.6"/><path d="M1 1.5l17 21" stroke="#2e1c24" stroke-width="3"/><path d="M1 1.5l17 21" stroke="#e6e6e6" stroke-width="1.5"/></svg>
<div class="t" style="left:1666px;top:1034px;font-size:14.2px;color:#f2f2f2">ENG</div>
<div class="t" style="left:1672px;top:1054px;font-size:14.2px;color:#f2f2f2">US</div>
<svg style="left:1718px;top:1040px" width="22" height="18" viewBox="0 0 22 18"><path d="M1 6a14.5 14.5 0 0 1 20 0M4 9.5a10 10 0 0 1 14 0M7.2 13a5.3 5.3 0 0 1 7.6 0" fill="none" stroke="#e6e6e6" stroke-width="1.7" stroke-linecap="round"/><circle cx="11" cy="16" r="1.6" fill="#e6e6e6"/></svg>
<svg style="left:1749px;top:1040px" width="20" height="19" viewBox="0 0 20 19"><path d="M1 6.5h3.5L9 2v15l-4.5-4.5H1z" fill="none" stroke="#e6e6e6" stroke-width="1.6" stroke-linejoin="round"/><path d="M12.5 6a4.5 4.5 0 0 1 0 7" fill="none" stroke="#e6e6e6" stroke-width="1.6"/><path d="M15.5 3.5a8 8 0 0 1 0 12" fill="none" stroke="#8d8d8d" stroke-width="1.5"/></svg>
<svg style="left:1779px;top:1042px" width="21" height="15" viewBox="0 0 21 15"><rect x="1" y="1" width="16.5" height="13" rx="2.5" fill="none" stroke="#e6e6e6" stroke-width="1.6"/><rect x="3.2" y="3.2" width="5" height="8.6" rx="1" fill="#e6e6e6"/><path d="M19.5 5v5" stroke="#e6e6e6" stroke-width="1.8" stroke-linecap="round"/></svg>
<div class="t" style="left:1842px;top:1032px;font-size:14.5px;color:#f2f2f2">2:36 PM</div>
<div class="t" style="left:1819px;top:1052px;font-size:15.4px;color:#f2f2f2">14/10/2025</div>
</body></html>
